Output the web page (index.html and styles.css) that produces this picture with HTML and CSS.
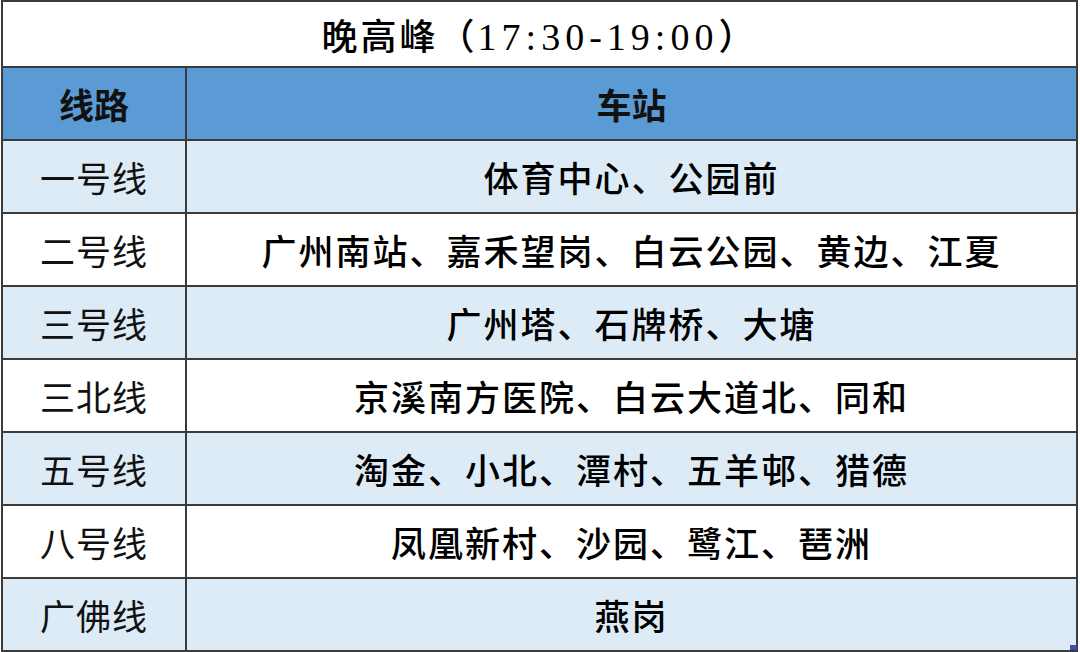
FILE: index.html
```html
<!DOCTYPE html>
<html lang="zh-CN">
<head>
<meta charset="utf-8">
<link rel="stylesheet" href="styles.css">
</head>
<body>
<div class="wrap">
<table class="tbl">
  <colgroup><col class="c1"><col class="c2"></colgroup>
  <tr class="title"><td colspan="2"><span class="ttl">晚高峰（<span class="num">17:30-19:00</span>）</span></td></tr>
  <tr class="head"><td>线路</td><td>车站</td></tr>
  <tr class="alt"><td class="line">一号线</td><td class="st">体育中心、公园前</td></tr>
  <tr><td class="line">二号线</td><td class="st">广州南站、嘉禾望岗、白云公园、黄边、江夏</td></tr>
  <tr class="alt"><td class="line">三号线</td><td class="st">广州塔、石牌桥、大塘</td></tr>
  <tr><td class="line">三北线</td><td class="st">京溪南方医院、白云大道北、同和</td></tr>
  <tr class="alt"><td class="line">五号线</td><td class="st">淘金、小北、潭村、五羊邨、猎德</td></tr>
  <tr><td class="line">八号线</td><td class="st">凤凰新村、沙园、鹭江、琶洲</td></tr>
  <tr class="alt"><td class="line">广佛线</td><td class="st">燕岗</td></tr>
</table>
<span class="mark"></span>
</div>
</body>
</html>
```
FILE: styles.css
```css
html, body {
  margin: 0;
  padding: 0;
  background: #ffffff;
}
.wrap {
  position: relative;
  width: 1080px;
  height: 652px;
  overflow: hidden;
}
.tbl {
  margin: 0 0 0 1px;
  width: 1077px;
  border-collapse: collapse;
  table-layout: fixed;
  font-family: "Noto Sans CJK SC", "Noto Sans", sans-serif;
  color: #111111;
}
.c1 { width: 184px; }
.tbl td {
  border: 2px solid #3b3b3b;
  text-align: center;
  vertical-align: middle;
  padding: 0;
  height: 71px;
  font-size: 35px;
  line-height: 1;
}
.tbl tr.title td {
  height: 64px;
  font-size: 36px;
  font-weight: 500;
  background: #ffffff;
  color: #000000;
}
.ttl {
  display: inline-block;
  padding-top: 4px;
  letter-spacing: 3px;
}
.num {
  font-family: "Liberation Serif", serif;
  font-size: 38px;
  font-weight: 400;
  letter-spacing: 5px;
}
.tbl tr.head td {
  background: #5b9bd5;
  font-weight: 700;
}
.tbl tr.alt td {
  background: #ddebf7;
}
.line {
  font-weight: 400;
  letter-spacing: 1px;
}
.st {
  font-weight: 500;
  letter-spacing: 2px;
  color: #000000;
}
.mark {
  position: absolute;
  right: 3px;
  bottom: 2px;
  width: 7px;
  height: 5px;
  background: #3f4fb0;
}
```
